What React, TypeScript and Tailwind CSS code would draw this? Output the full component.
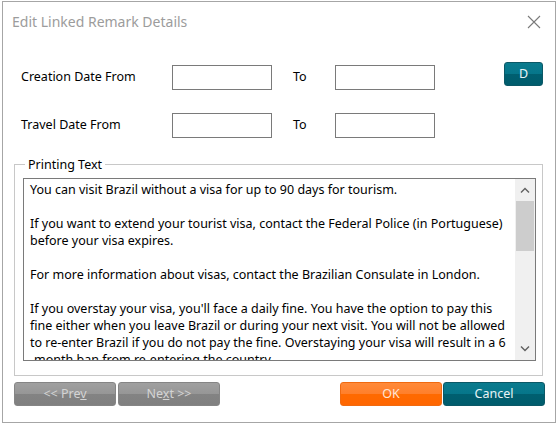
import React from "react";

const lines = [
  "You can visit Brazil without a visa for up to 90 days for tourism.",
  "",
  "If you want to extend your tourist visa, contact the Federal Police (in Portuguese)",
  "before your visa expires.",
  "",
  "For more information about visas, contact the Brazilian Consulate in London.",
  "",
  "If you overstay your visa, you'll face a daily fine. You have the option to pay this",
  "fine either when you leave Brazil or during your next visit. You will not be allowed",
  "to re-enter Brazil if you do not pay the fine. Overstaying your visa will result in a 6",
  "-month ban from re-entering the country.",
];

const font = { fontFamily: '"Noto Sans", "Open Sans", sans-serif' };

function DateInput() {
  return <div className="w-[100px] h-[25px] border border-[#7a7a7a] bg-white" />;
}

export default function App() {
  return (
    <div className="w-[557px] h-[425px] bg-white overflow-hidden flex" style={font}>
      <div className="ml-[2px] mt-[1px] w-[554px] h-[422px] border border-[#a6a6a6] bg-white flex flex-col">
        {/* header */}
        <div className="h-[38px] flex items-center justify-between pl-[9px] pr-[14px]">
          <span className="text-[14px] text-[#9c9c9c] leading-none mt-[1px]">Edit Linked Remark Details</span>
          <svg width="14" height="14" viewBox="0 0 14 14" className="mt-[2px]">
            <path d="M1 1 L13 13 M13 1 L1 13" stroke="#7a7a7a" strokeWidth="1.1" fill="none" />
          </svg>
        </div>

        {/* form rows */}
        <div className="pl-[18px] mt-[22px] flex flex-col gap-[23px] text-[12.5px] text-black">
          <div className="flex items-start">
            <div className="w-[151px] h-[25px] mt-[3px] flex items-center">Creation Date From</div>
            <div className="mt-[3px]"><DateInput /></div>
            <div className="w-[63px] h-[25px] mt-[3px] pl-[21px] flex items-center">To</div>
            <div className="mt-[3px]"><DateInput /></div>
            <button className="ml-[69px] w-[39px] h-[24px] rounded-[3px] border border-[#0b5866] bg-[linear-gradient(to_bottom,#0a7b8e_0%,#06768a_50%,#005f70_50%,#005c6c_100%)] text-[#e8f4f6] text-[12.5px] leading-none">
              D
            </button>
          </div>
          <div className="flex items-start">
            <div className="w-[151px] h-[25px] flex items-center">Travel Date From</div>
            <DateInput />
            <div className="w-[63px] h-[25px] pl-[21px] flex items-center">To</div>
            <DateInput />
          </div>
        </div>

        {/* group box */}
        <fieldset className="ml-[11px] mt-[18px] w-[529px] h-[220px] border border-[#c8c8c8] pl-[8px] pr-[6px] pt-[5px]">
          <legend className="ml-[2px] px-[3px] text-[12.5px] text-black leading-[17px]">Printing Text</legend>
          <div className="w-[513px] h-[183px] border border-[#7a7a7a] bg-white flex">
            <div className="flex-1 overflow-hidden pl-[6px] pt-[2px] text-[12.5px] leading-[17px] text-black">
              {lines.map((l, i) => (
                <div key={i} className="whitespace-nowrap h-[17px]">{l || "\u00a0"}</div>
              ))}
            </div>
            <div className="w-[20px] bg-[#f0f0f0] flex flex-col items-stretch">
              <div className="h-[22px] flex items-center justify-center">
                <svg width="10" height="6" viewBox="0 0 10 6">
                  <path d="M1 5.5 L5 1.5 L9 5.5" stroke="#606060" strokeWidth="1.4" fill="none" />
                </svg>
              </div>
              <div className="mx-[1px] h-[50px] bg-[#cdcdcd]" />
              <div className="flex-1" />
              <div className="h-[22px] flex items-center justify-center">
                <svg width="10" height="6" viewBox="0 0 10 6">
                  <path d="M1 0.5 L5 4.5 L9 0.5" stroke="#606060" strokeWidth="1.4" fill="none" />
                </svg>
              </div>
            </div>
          </div>
        </fieldset>

        {/* bottom buttons */}
        <div className="mt-[6px] pl-[11px] flex text-[12.5px]">
          <button className="w-[102px] h-[24px] rounded-[3px] border border-[#858585] bg-[linear-gradient(to_bottom,#a0a0a0_0%,#969696_50%,#838383_50%,#808080_100%)] text-[#d4d4d4] leading-none">
              &lt;&lt; Pre<span className="underline">v</span>
          </button>
          <button className="ml-[2px] w-[102px] h-[24px] rounded-[3px] border border-[#858585] bg-[linear-gradient(to_bottom,#a0a0a0_0%,#969696_50%,#838383_50%,#808080_100%)] text-[#d4d4d4] leading-none">
              Ne<span className="underline">x</span>t &gt;&gt;
          </button>
          <button className="ml-[120px] w-[102px] h-[24px] rounded-[3px] border border-[#f06a10] bg-[linear-gradient(to_bottom,#ff8a3a_0%,#ff7f2a_50%,#ff6a00_50%,#ff6600_100%)] text-[#ffe6d6] leading-none">
            OK
          </button>
          <button className="ml-[1px] w-[102px] h-[24px] rounded-[3px] border border-[#0b5866] bg-[linear-gradient(to_bottom,#0a7b8e_0%,#06768a_50%,#005f70_50%,#005c6c_100%)] text-[#e8f4f6] leading-none">
            Cancel
          </button>
        </div>
      </div>
    </div>
  );
}
